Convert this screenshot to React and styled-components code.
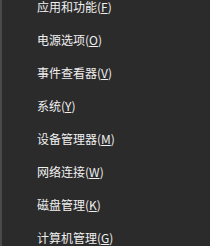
import React from 'react';
import styled, { createGlobalStyle } from 'styled-components';

const GlobalStyle = createGlobalStyle`
    html, body {
        margin: 0;
        padding: 0;
        background: #2b2b2b;
        overflow: hidden;
    }
`;

const Menu = styled.div`
    width: 210px;
    height: 246px;
    box-sizing: border-box;
    background: #2b2b2b;
    border-left: 2px solid #4a4a4a;
    overflow: hidden;
`;

const List = styled.ul`
    list-style: none;
    margin: -10px 0 0 0;
    padding: 0;
    display: flex;
    flex-direction: column;
`;

const Item = styled.li`
    height: 33px;
    display: flex;
    align-items: center;
    padding-left: 35px;
    font-family: "Noto Sans CJK SC", "Noto Sans", sans-serif;
    font-size: 12px;
    color: #f0f0f0;
    white-space: nowrap;
`;

const Key = styled.span`
    text-decoration: underline;
    text-underline-offset: 1px;
`;

const items = [
    ['应用和功能', 'F'],
    ['电源选项', 'O'],
    ['事件查看器', 'V'],
    ['系统', 'Y'],
    ['设备管理器', 'M'],
    ['网络连接', 'W'],
    ['磁盘管理', 'K'],
    ['计算机管理', 'G'],
];

export default function App() {
    return (
        <>
            <GlobalStyle />
            <Menu>
                <List>
                    {items.map(([label, key]) => (
                        <Item key={key}>
                            {label}(<Key>{key}</Key>)
                        </Item>
                    ))}
                </List>
            </Menu>
        </>
    );
}
